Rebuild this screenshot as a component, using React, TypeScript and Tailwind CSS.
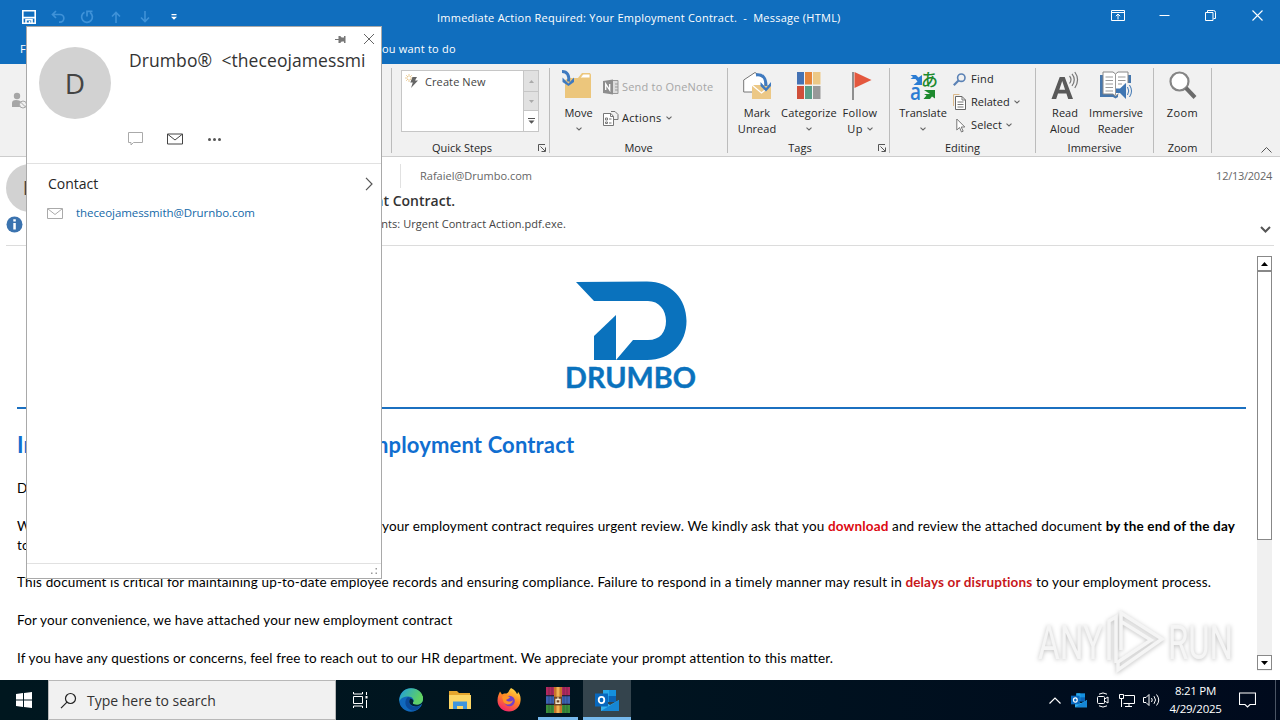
import type { JSX, ReactNode } from 'react';

function cx(...classNames: Array<string | false | null | undefined>): string {
  return classNames.filter(Boolean).join(' ');
}

function Caret({ className }: { className?: string }): JSX.Element {
  return (
    <svg className={cx('shrink-0', className)} width="6" height="4" viewBox="0 0 6 4" fill="none" stroke="#666" strokeWidth="1.1">
      <path d="M.5.7 3 3 5.5.7" />
    </svg>
  );
}

function Envelope({ className, stroke, width, height }: { className?: string; stroke: string; width: number; height: number }): JSX.Element {
  return (
    <svg className={className} width={width} height={height} viewBox="0 0 16 11" fill="none" stroke={stroke}>
      <path d="M.5.5h15v10H.5zM.8.8 8 6.5 15.2.8" />
    </svg>
  );
}

/* Title bar */

function QuickAccess(): JSX.Element {
  return (
    <div className="flex items-center pl-[22px]">
      <svg width="14" height="14" viewBox="0 0 14 14" fill="none" stroke="#fff" strokeWidth="1.6">
        <path d="M.8.8h12.4v12.4H.8zM1 7.6h12" />
        <path d="M4 13v-3.2h6V13M7.6 11v2" />
      </svg>
      <svg className="ml-[15px]" width="14" height="14" viewBox="0 0 14 14" fill="none" stroke="#3f92d8" strokeWidth="1.7">
        <path d="M5 1 1.5 4.5 5 8M1.8 4.5H9a3.7 3.7 0 0 1 0 7.7H8" />
      </svg>
      <svg className="ml-[15px]" width="14" height="14" viewBox="0 0 14 14" fill="none" stroke="#3f92d8" strokeWidth="1.7">
        <path d="M4.5 2.2A5.4 5.4 0 1 0 10 2.5M7 6.5V1.3h5.5" />
      </svg>
      <svg className="ml-[16px]" width="12" height="12" viewBox="0 0 12 12" fill="none" stroke="#3f92d8" strokeWidth="1.6">
        <path d="M6 12V1.5M2 5.5l4-4 4 4" />
      </svg>
      <svg className="ml-[17px]" width="12" height="12" viewBox="0 0 12 12" fill="none" stroke="#3f92d8" strokeWidth="1.6">
        <path d="M6 0v10.5M2 6.5l4 4 4-4" />
      </svg>
      <svg className="ml-[20px]" width="6" height="6" viewBox="0 0 6 6" fill="#fff">
        <path d="M.5 0h5v1.2h-5zM0 2.8h6L3 5.8z" />
      </svg>
    </div>
  );
}

function WindowControls(): JSX.Element {
  return (
    <div className="flex items-center pb-[3px]">
      <svg width="14" height="11" viewBox="0 0 14 11" fill="none" stroke="#fff">
        <path d="M.5.5h13v10H.5zM.5 2.5h13M7 9.5V4M4.8 6.2 7 4l2.2 2.2" />
      </svg>
      <svg className="ml-[34px]" width="11" height="11" viewBox="0 0 11 11" stroke="#fff">
        <path d="M.5 5.5h10" />
      </svg>
      <svg className="ml-[35px]" width="11" height="11" viewBox="0 0 11 11" fill="none" stroke="#fff">
        <path d="M.5 2.5H8v8H.5zM2.5 2.5v-2h6q2 0 2 2v6h-2" />
      </svg>
      <svg className="ml-[36px] mr-[17px]" width="11" height="11" viewBox="0 0 11 11" stroke="#fff" strokeWidth="1.1">
        <path d="m.5.5 10 10m0-10-10 10" />
      </svg>
    </div>
  );
}

function TitleBar(): JSX.Element {
  return (
    <header className="h-16 bg-[#106ebe] text-[11px] text-white">
      <div className="grid h-[33px] grid-cols-[437px_1fr_auto] items-center">
        <QuickAccess />
        <span className="whitespace-pre pt-[3px] tracking-[0.245px]">Immediate Action Required: Your Employment Contract.  -  Message (HTML)</span>
        <WindowControls />
      </div>
      <div className="flex h-[31px] items-center pl-5 pt-px">
        <span className="w-[362px]">File</span>
        <span className="tracking-[0.2px]">ou want to do</span>
      </div>
    </header>
  );
}

/* Ribbon */

function Group({ children, className, label, launcher }: { children: ReactNode; className: string; label: string; launcher?: boolean }): JSX.Element {
  return (
    <section className={cx('flex shrink-0 flex-col', className)}>
      <div className="flex h-[76px] pt-1.5">{children}</div>
      <div className="flex h-4 items-center">
        <span className={cx('flex-1 text-center', launcher && 'pr-[6px]')}>{label}</span>
        {launcher ? (
          <svg className="mr-[3px]" width="8" height="8" viewBox="0 0 8 8" fill="none" stroke="#555">
            <path d="M.5 7V.5H7M2.5 2.5 7 7M7.5 3.5v4h-4" />
          </svg>
        ) : null}
      </div>
    </section>
  );
}

function Divider(): JSX.Element {
  return <div className="mt-1 h-[85px] w-px shrink-0 bg-[#bcbcbc]" />;
}

function BigButton({ caret, className, icon, lines }: { caret?: boolean; className: string; icon: ReactNode; lines: string[] }): JSX.Element {
  return (
    <div className={cx('flex shrink-0 flex-col items-center', className)}>
      <div className="flex h-[35px] items-start justify-center">{icon}</div>
      {lines.map((line, i) => (
        <span key={line} className="flex items-center gap-1 whitespace-nowrap leading-4">
          {line}
          {caret && i > 0 ? <Caret /> : null}
        </span>
      ))}
      {caret && lines.length === 1 ? <Caret className="mt-[6px]" /> : null}
    </div>
  );
}

function SmallButton({ caret, className, icon, label }: { caret?: boolean; className?: string; icon: ReactNode; label: string }): JSX.Element {
  return (
    <div className={cx('flex items-center whitespace-nowrap', className)}>
      {icon}
      <span>{label}</span>
      {caret ? <Caret className="ml-1" /> : null}
    </div>
  );
}

function QuickSteps(): JSX.Element {
  return (
    <div className="ml-[9px] flex h-[62px] w-[138px] border border-[#c6c6c6] bg-white">
      <div className="flex h-[22px] flex-1 items-center pl-[3px] text-[#444]">
        <svg width="14" height="16" viewBox="0 0 14 16">
          <path d="M4 0v8M0 4h8M1.2 1.2l5.6 5.6M6.8 1.2 1.2 6.8" stroke="#e8c58a" strokeWidth=".9" />
          <circle cx="4" cy="4" r="1.3" fill="#fff" />
          <path d="M7.500 3H12l-2 3.500h3L6 14l1.800-5.500H5.300z" fill="#666" />
        </svg>
        <span className="ml-[6px] tracking-[0.1px]">Create New</span>
      </div>
      <div className="grid w-[15px] grid-rows-3 border-l border-[#c6c6c6]">
        <div className="flex items-center justify-center bg-[#e1e1e1]">
          <svg width="5" height="3" viewBox="0 0 5 3" fill="#aaa"><path d="M0 3h5L2.5 0z" /></svg>
        </div>
        <div className="flex items-center justify-center border-y border-[#c6c6c6] bg-[#e1e1e1]">
          <svg width="5" height="3" viewBox="0 0 5 3" fill="#aaa"><path d="M0 0h5L2.5 3z" /></svg>
        </div>
        <div className="flex items-center justify-center">
          <svg width="7" height="6" viewBox="0 0 7 6" fill="#555"><path d="M0 0h7v1H0zM.5 2.5h6L3.5 5.8z" /></svg>
        </div>
      </div>
    </div>
  );
}

const moveIcon = (
  <svg className="mr-[3px]" width="30" height="30" viewBox="0 0 30 30">
    <path d="M3 28V10l4-2h9l4-5h8l1 2v23z" fill="#ecc67c" />
    <path d="M18 8l3-4h7v4z" fill="#fff" stroke="#ecc67c" />
    <path d="M0 1.500c5.500 0 7.500 4 6.500 10" fill="none" stroke="#3f7ac0" strokeWidth="3" />
    <path d="m.5 7.500 6 6 5.500-6v4.500l-5.500 4-6-4z" fill="#3f7ac0" />
  </svg>
);

const oneNoteIcon = (
  <svg className="mr-[3px]" width="16" height="16" viewBox="0 0 16 16">
    <path d="M7 1.5h8v13H7z" fill="#ddd" stroke="#999" />
    <path d="M12 5h3M12 8h3M12 11h3" stroke="#999" />
    <path d="M0 2 10 .5v15L0 14z" fill="#8e8e8e" />
    <path d="M2.7 11V5l4 6V5" fill="none" stroke="#fff" strokeWidth="1.3" />
  </svg>
);

const actionsIcon = (
  <svg className="mr-[3px]" width="16" height="15" viewBox="0 0 16 15" fill="none" stroke="#777">
    <path d="M8 2.5H.5v12h10v-9zM7.5 2.5v3h3" fill="#fff" />
    <path d="M2.5 7h2v2h-2zM2.5 11h2v1.5h-2zM6 8h2.5M6 12h2.5M8 .5h4l3 3v5h-4" />
  </svg>
);

const markUnreadIcon = (
  <svg width="28" height="30" viewBox="0 0 28 30">
    <path d="M.7 22V10L12 2.5 22 9v13z" fill="#fff" stroke="#777" />
    <path d="M9 15h19v14H9z" fill="#ecc886" />
    <path d="m9 15 9.5 8L28 15" fill="none" stroke="#fff" strokeWidth="1.3" />
    <path d="M13 5c7-1 10 3 10 11" fill="none" stroke="#3f7ac0" strokeWidth="3" />
    <path d="m17.5 12 5.5 6 5-6v4l-5 5.5-5.5-5.5z" fill="#3f7ac0" />
  </svg>
);

const categorizeIcon = (
  <svg width="24" height="30" viewBox="0 0 24 30">
    <path d="M0 2h7v12.5H0z" fill="#4472b4" />
    <path d="M8 2h7v12.5H8z" fill="#e5853b" />
    <path d="M16 2h7.500v12.500H16z" fill="#ecc886" />
    <path d="M0 16h7v13H0z" fill="#cf4f3a" />
    <path d="M8 16h7v13H8z" fill="#5a9e88" />
    <path d="M16 16h7.500v13H16z" fill="#999" />
  </svg>
);

const flagIcon = (
  <svg className="ml-1" width="20" height="30" viewBox="0 0 20 30">
    <path d="M1 2v28" stroke="#777" strokeWidth="1.6" />
    <path d="m2.5 2 17 8-17 8z" fill="#e4583e" />
  </svg>
);

const translateIcon = (
  <svg className="overflow-visible" width="28" height="30" viewBox="0 0 28 30">
    <path d="M1.500 5H7l2.500 2.500L13 5v10H4.500l4-3.500-2-2.500h-5L4 7z" fill="#2b7cd3" />
    <path d="M15 20h11v8.500l-3-2L21 29h-6.500l3-3.500L15 24h6z" fill="#1e8a2e" />
    <text x="1" y="30" fontSize="23" fontWeight="600" fill="#2b7cd3" fontFamily="Open Sans, sans-serif" textLength="11" lengthAdjust="spacingAndGlyphs">a</text>
    <text x="12" y="16" fontSize="17" fontWeight="500" fill="#1e8a2e" fontFamily="Noto Sans CJK JP, sans-serif">あ</text>
  </svg>
);

const findIcon = (
  <svg className="mr-[5px]" width="13" height="13" viewBox="0 0 13 13" fill="none">
    <circle cx="8.300" cy="4.700" r="3.700" stroke="#5b82b5" strokeWidth="1.6" />
    <path d="M5.500 7.500.8 12.200" stroke="#5b82b5" strokeWidth="2.2" />
  </svg>
);

const relatedIcon = (
  <svg className="mr-[4px]" width="14" height="16" viewBox="0 0 14 16" fill="none">
    <path d="M.5 12V.5h6" stroke="#dcb98a" />
    <path d="M2.5 2.5H9L12.5 6v9.500h-10z" fill="#fff" stroke="#666" />
    <path d="M9 2.500V6h3.500M4.500 8h6M4.500 10.500h6M4.500 13h6" stroke="#777" />
  </svg>
);

const selectIcon = (
  <svg className="ml-[3px] mr-[5px]" width="10" height="15" viewBox="0 0 10 15" fill="#fff" stroke="#777">
    <path d="M.8 1v11l2.700-2.500 2 4.500 1.700-.8-2-4.200h3.600z" />
  </svg>
);

const readAloudIcon = (
  <svg width="28" height="30" viewBox="0 0 28 30" fill="none">
    <path d="M.5 29 8.700 7h5L22 29h-4.800l-1.800-5.500H7L5.200 29zM8.300 19.700h5.800L11.200 11z" fill="#595959" fillRule="evenodd" />
    <path d="M18.500 6q3 3.500 0 7.500M21 3.800q4.500 5.700 0 12M23.800 2q5.500 7.500 0 16" stroke="#777" strokeWidth="1.2" />
  </svg>
);

const readerIcon = (
  <svg width="32" height="30" viewBox="0 0 32 30" fill="none">
    <path d="M0 5h31v22H18l-2.500 1.500L13 27H0z" fill="#4677ad" />
    <path d="M3 2h10l2.500 2L18 2h10v22H18l-2.500 2-2.500-2H3z" fill="#fff" stroke="#888" />
    <path d="M15.500 4v21M5.500 7H13M5.500 10.500H13M5.500 14H13M5.500 17.500H13M5.500 21H13M18 7h7.500M18 10.500h7.500M18 14h4" stroke="#999" />
    <path d="M24 13h8v16H18v-4z" fill="#f1f1f1" />
    <path d="M16 18.500h4l6-5.500v16l-6-6h-4z" fill="#3f76b3" />
    <path d="M27.500 17q2.500 4 0 8M29.500 15q4 6 0 12" stroke="#3f76b3" />
  </svg>
);

const zoomIcon = (
  <svg width="28" height="30" viewBox="0 0 28 30" fill="none" stroke="#6b6b6b">
    <circle cx="10.500" cy="11.500" r="9" fill="#fff" stroke="#858585" strokeWidth="2.2" />
    <path d="m17 18 9 9.500" strokeWidth="4" />
  </svg>
);

function Ribbon(): JSX.Element {
  return (
    <div className="flex h-[93px] border-b border-[#cdcdcd] bg-[#f1f1f1] text-[11px] text-[#262626]">
      <div className="w-[391px] shrink-0 pl-[11px] pt-7">
        <svg width="18" height="18" viewBox="0 0 18 18" fill="#a6a6a6">
          <circle cx="6" cy="4" r="3.2" />
          <path d="M1 15V11q0-3 4-3 4 0 5 2-2 2-1 5z" />
          <circle cx="12" cy="12.500" r="3.500" fill="#f1f1f1" stroke="#a6a6a6" />
          <path d="m9.500 10 5 5" stroke="#a6a6a6" />
        </svg>
      </div>
      <Divider />
      <Group className="w-[157px]" label="Quick Steps" launcher>
        <QuickSteps />
      </Group>
      <Divider />
      <Group className="w-[177px]" label="Move">
        <BigButton caret className="ml-[10px] w-[37px]" icon={moveIcon} lines={['Move']} />
        <div className="ml-[6px] mt-[9px] flex flex-col gap-[15px]">
          <SmallButton className="h-4 tracking-[0.2px] text-[#a6a6a6]" icon={oneNoteIcon} label="Send to OneNote" />
          <SmallButton className="h-4 tracking-[0.3px]" caret icon={actionsIcon} label="Actions" />
        </div>
      </Group>
      <Divider />
      <Group className="w-[161px]" label="Tags" launcher>
        <BigButton className="ml-[9px] w-10" icon={markUnreadIcon} lines={['Mark', 'Unread']} />
        <BigButton caret className="ml-[2px] w-[60px] tracking-[0.15px]" icon={categorizeIcon} lines={['Categorize']} />
        <BigButton caret className="ml-px w-10 tracking-[0.3px]" icon={flagIcon} lines={['Follow', 'Up']} />
      </Group>
      <Divider />
      <Group className="w-[145px]" label="Editing">
        <BigButton caret className="ml-[8px] w-[50px]" icon={translateIcon} lines={['Translate']} />
        <div className="ml-[5px] flex flex-col gap-[7px] pt-px">
          <SmallButton className="h-4 tracking-[0.3px]" icon={findIcon} label="Find" />
          <SmallButton className="h-4" caret icon={relatedIcon} label="Related" />
          <SmallButton className="h-4 tracking-[0.1px]" caret icon={selectIcon} label="Select" />
        </div>
      </Group>
      <Divider />
      <Group className="w-[117px]" label="Immersive">
        <BigButton className="ml-[10px] w-[38px]" icon={readAloudIcon} lines={['Read', 'Aloud']} />
        <BigButton className="ml-[3px] w-[58px]" icon={readerIcon} lines={['Immersive', 'Reader']} />
      </Group>
      <Divider />
      <Group className="w-[57px]" label="Zoom">
        <BigButton className="w-[57px] tracking-[0.4px]" icon={zoomIcon} lines={['Zoom']} />
      </Group>
      <Divider />
      <div className="flex flex-1 items-end justify-end pb-[3px] pr-2">
        <svg width="11" height="6" viewBox="0 0 11 6" fill="none" stroke="#555">
          <path d="m.5 5.500 5-5 5 5" />
        </svg>
      </div>
    </div>
  );
}

/* Message */

function MessageHeader(): JSX.Element {
  return (
    <div className="mx-1.5 flex h-[89px] border-b border-[#dcdcdc]">
      <div className="w-12 shrink-0 pt-[7px]">
        <div className="flex size-12 items-center justify-center rounded-full bg-[#d2d2d2] text-xl text-[#444]">D</div>
        <svg className="mt-[4px]" width="17" height="17" viewBox="0 0 17 17">
          <circle cx="8.500" cy="8.500" r="8" fill="#3b73af" />
          <path d="M7.300 7h2.500v6.500H7.300zM7.300 3.300h2.500v2.200H7.300z" fill="#fff" />
        </svg>
      </div>
      <div className="w-[512px] shrink-0 text-[#444]">
        <div className="flex h-[37px] items-center">
          <div className="ml-[346px] h-6 w-px bg-[#e1e1e1]" />
          <span className="ml-[19px] pt-px text-[11px] text-[#666]">Rafaiel@Drumbo.com</span>
        </div>
        <div className="flex h-[13px] w-[401px] items-center justify-end whitespace-nowrap text-[14px] font-semibold leading-[13px] text-[#333]">Employment Contract.</div>
        <div className="mt-[9px] flex justify-end whitespace-nowrap text-[11px] leading-4 tracking-[0.05px]">attachments: Urgent Contract Action.pdf.exe.</div>
      </div>
      <div className="flex flex-1 flex-col items-end text-[11px] text-[#666]">
        <span className="mt-[11px] pr-0.5 leading-4 tracking-[-0.25px]">12/13/2024</span>
        <svg className="mr-[3px] mt-[42px]" width="11" height="7" viewBox="0 0 11 7" fill="none" stroke="#555" strokeWidth="2">
          <path d="m1 1 4.500 4.500L10 1" />
        </svg>
      </div>
    </div>
  );
}

function DrumboLogo(): JSX.Element {
  return (
    <svg className="ml-[565px] mt-[34px] overflow-visible" width="132" height="110" viewBox="0 0 132 110" fill="#0a72bd">
      <path d="M11 2 82 1.500c24 0 39.500 17.500 39.500 39.500S106 80 82 80H51l17-20h15c12 0 18-8 18-19s-7-20-18-20H29z" />
      <path d="M29 56 51 35v45H29z" />
      <text x="0" y="108" fontFamily="Lato, sans-serif" fontWeight="700" fontSize="28" stroke="#0a72bd" strokeWidth=".4" textLength="131" lengthAdjust="spacingAndGlyphs">DRUMBO</text>
    </svg>
  );
}

/** Start of a line that runs underneath the contact card. */
function Lead({ children, className }: { children: ReactNode; className: string }): JSX.Element {
  return <span className={cx('shrink-0', className)}>{children}</span>;
}

function MessageBody(): JSX.Element {
  return (
    <div className="h-[434px] min-w-0 flex-1 overflow-hidden font-['Lato',sans-serif] text-[13.5px] leading-[19px] text-black">
      <DrumboLogo />
      <div className="ml-[17px] mt-[17px] h-0.5 w-[1229px] bg-[#1b70c0]" />
      <div className="ml-[17px] whitespace-pre tracking-[0.145px]">
        <h1 className="mt-[20px] flex h-8 items-center text-[22px] font-bold leading-8 text-[#106ed0]">
          <Lead className="w-[353px]">Important</Lead>
          <span>mployment Contract</span>
        </h1>
        <p className="mt-[18px]">Dear</p>
        <p className="mt-[19px] flex tracking-[0.135px]">
          <Lead className="w-[365px]">We</Lead>
          <span>your employment contract requires urgent review. We kindly ask that you <b className="text-[#dc0a12]">download</b> and review the attached document <b>by the end of the day</b></span>
        </p>
        <p>to</p>
        <p className="mt-[18px]">This document is critical for maintaining up-to-date employee records and ensuring compliance. Failure to respond in a timely manner may result in <b className="text-[#c8171b]">delays or disruptions</b> to your employment process.</p>
        <p className="mt-[19px] tracking-[0.155px]">For your convenience, we have attached your new employment contract</p>
        <p className="mt-[19px] tracking-[0.125px]">If you have any questions or concerns, feel free to reach out to our HR department. We appreciate your prompt attention to this matter.</p>
      </div>
    </div>
  );
}

function Scrollbar(): JSX.Element {
  return (
    <div className="mr-2 mt-[10px] flex h-[415px] w-[15px] flex-col bg-[#f0f0f0]">
      <div className="flex h-[15px] items-center justify-center border border-[#888] bg-white">
        <svg width="7" height="4" viewBox="0 0 7 4"><path d="M0 4h7L3.5 0z" /></svg>
      </div>
      <div className="h-[269px] border border-[#888] bg-white" />
      <div className="flex-1" />
      <div className="mb-px flex h-[15px] items-center justify-center border border-[#888] bg-white">
        <svg width="7" height="4" viewBox="0 0 7 4"><path d="M0 0h7L3.5 4z" /></svg>
      </div>
    </div>
  );
}

function Watermark(): JSX.Element {
  return (
    <svg className="absolute left-[1032px] top-[604px] overflow-visible drop-shadow-[0_1px_2px_rgba(0,0,0,0.25)]" width="206" height="74" viewBox="0 0 206 74" fill="none" stroke="#f5f5f5" strokeWidth="3.5">
      <g fill="#f5f5f5" stroke="none" fontFamily="Roboto, sans-serif" fontSize="49">
        <text x="6" y="55" textLength="65" lengthAdjust="spacingAndGlyphs">ANY</text>
        <text x="136" y="55" textLength="65" lengthAdjust="spacingAndGlyphs">RUN</text>
      </g>
      <path d="M77 56V17l7-4v46" />
      <path d="M89 46V9l41 26-44 31v-8l33-22-29-18" />
    </svg>
  );
}

/* Contact card */

function ContactCard(): JSX.Element {
  return (
    <aside className="absolute left-[26px] top-[26px] flex h-[553px] w-[356px] flex-col border border-[#a9a9a9] bg-white">
      <div className="h-[137px] border-b border-[#e1e1e1]">
        <div className="flex h-5 items-end justify-end gap-[17px] pr-[6px]">
          <svg className="mb-[3px]" width="11" height="9" viewBox="0 0 11 9" fill="#777">
            <path d="M0 4h4v1H0zM3.500 1h1.700l1.500 1.500H9V1h1.500v7H9V6.500H6.700L5.200 8H3.500z" />
          </svg>
          <svg className="mb-0.5" width="12" height="12" viewBox="0 0 12 12" stroke="#666">
            <path d="m1 1 10 10m0-10L1 11" />
          </svg>
        </div>
        <div className="flex pl-3">
          <div className="flex size-[72px] shrink-0 items-center justify-center rounded-full bg-[#d2d2d2] text-[28px] text-[#444]">D</div>
          <div className="-mt-px ml-[18px] h-7 w-[238px] overflow-hidden whitespace-pre text-[17.5px] leading-7 tracking-[0.08px] text-[#333]">Drumbo®  &lt;theceojamessmi</div>
        </div>
        <div className="mt-[13px] flex items-center pl-[101px]">
          <svg width="15" height="14" viewBox="0 0 15 14" fill="none" stroke="#aaa">
            <path d="M.5.5h14v10h-9L3 13v-2.500H.5z" />
          </svg>
          <Envelope className="ml-[24px]" stroke="#444" width={16} height={12} />
          <svg className="ml-[25px]" width="13" height="3" viewBox="0 0 13 3" fill="#555">
            <circle cx="1.500" cy="1.500" r="1.5" />
            <circle cx="6.500" cy="1.500" r="1.5" />
            <circle cx="11.500" cy="1.500" r="1.5" />
          </svg>
        </div>
      </div>
      <div className="flex h-10 items-center justify-between pl-[21px] pr-2 text-[14px] text-[#262626]">
        <span className="pb-px">Contact</span>
        <svg width="8" height="14" viewBox="0 0 8 14" fill="none" stroke="#555" strokeWidth="1.2">
          <path d="m1 .8 6 6.200-6 6.200" />
        </svg>
      </div>
      <div className="flex h-[18px] items-center pl-5">
        <Envelope stroke="#aaa" width={16} height={11} />
        <span className="ml-[13px] text-[11.5px] tracking-[-0.07px] text-[#1469a8]">theceojamessmith@Drurnbo.com</span>
      </div>
      <div className="mt-auto flex h-[15px] items-end justify-end border-t border-[#e1e1e1] p-[3px]">
        <svg width="7" height="7" viewBox="0 0 7 7" fill="#999">
          <path d="M4.500 0H6v1.500H4.500zM4.500 4.500H6V6H4.500zM0 4.500h1.500V6H0z" />
        </svg>
      </div>
    </aside>
  );
}

/* Taskbar */

function OutlookIcon({ size }: { size: number }): JSX.Element {
  return (
    <svg width={size} height={size} viewBox="0 0 24 24">
      <path d="M8 2h13v12H8z" fill="#1490df" />
      <path d="M8 2h6v6H8z" fill="#28a8ea" />
      <path d="M14 8h7v6h-7z" fill="#0a62b5" />
      <path d="M6 12l9 5 9-5v11H6z" fill="#35b2ee" />
      <path d="m6 23 18-11v11z" fill="#1686d4" />
      <path d="M0 5.500h13v13H0z" fill="#0868bd" />
      <ellipse cx="6.500" cy="12" rx="2.800" ry="3.200" fill="none" stroke="#fff" strokeWidth="1.8" />
    </svg>
  );
}

function EdgeIcon(): JSX.Element {
  return (
    <svg width="24" height="24" viewBox="0 0 24 24">
      <defs>
        <linearGradient id="edge-top" x1="0" x2="1" y1="0" y2=".4">
          <stop stopColor="#1f9ee0" />
          <stop offset="1" stopColor="#63d45b" />
        </linearGradient>
      </defs>
      <circle cx="12" cy="12" r="11.800" fill="#1069bd" />
      <path d="M.5 11C1.500 4 6.500.2 12 .2 19 .2 24 5 24 10.500c0 4-3 6-6.500 6-2.500 0-4-1-3.500-2 2-3-1-6-4.500-6C5 8.500 1 10 .5 14z" fill="url(#edge-top)" />
      <path d="M9 9c-4 3-4 11 4 13.500 4 .5 7-1.500 9-5-6 3-12 1-12-4 0-2 1-3 2-3.500z" fill="#0b4a99" />
      <path d="M11.500 10.500c-2 2-1.800 6 2.500 7.500 4 1.200 8-.3 9.500-3l-1 3.500 1.500 3V10c0 5-3 6.700-6.500 6.500-2.500 0-4-1-3.500-2 1-1.500.5-3.300-2.500-4z" fill="#00171f" opacity=".85" />
      <path d="M24 10.500c0 4-3 6-6.500 6-2.500 0-4-1-3.500-2L24 8z" fill="#5fd06a" />
    </svg>
  );
}

function ExplorerIcon(): JSX.Element {
  return (
    <svg width="22" height="20" viewBox="0 0 22 20">
      <path d="M0 1h8l2 2h11v7H0z" fill="#e5a62d" />
      <path d="M0 5h22v14H0z" fill="#fcd665" />
      <path d="M4 19v-7.500h14V19h-4v-3H8v3z" fill="#3f95dc" />
    </svg>
  );
}

function FirefoxIcon(): JSX.Element {
  return (
    <svg width="24" height="24" viewBox="0 0 24 24">
      <defs>
        <linearGradient id="fox" x1=".8" x2=".3" y1="0" y2="1">
          <stop stopColor="#ffe14a" />
          <stop offset=".45" stopColor="#ff8a22" />
          <stop offset="1" stopColor="#f4226a" />
        </linearGradient>
      </defs>
      <path d="M14 0c4 2 5 4 6 6 1-.5 1-2 .8-2.500C23 6 24 9 23.500 13 23 19 18 23.500 12 23.500S.5 19 .5 12.500C.5 8 2 6 3 3.500l2 3C7 5 8 5.500 9.500 5.500 12 4.500 12 2 14 0z" fill="url(#fox)" />
      <circle cx="12.500" cy="13" r="5.300" fill="#7440c8" />
      <path d="M5 9c3-3 5-1 8 0-1 2-3 2-4 3 2 2 5 2 7 0-1 5-7 6-9.500 2z" fill="#ff9326" />
    </svg>
  );
}

function WinRarIcon(): JSX.Element {
  return (
    <svg width="24" height="26" viewBox="0 0 24 24" preserveAspectRatio="none">
      <path d="M0 0h24v8H0z" fill="#b3285f" />
      <path d="M0 8h24v8H0z" fill="#3c63b5" />
      <path d="M0 16h24v8H0z" fill="#3b8f3a" />
      <path d="M3 0v24M6 0v24M18 0v24M21 0v24" stroke="#1c2733" strokeOpacity=".35" />
      <path d="M0 8h24M0 16h24" stroke="#211a2a" />
      <path d="M8 0h8v24H8z" fill="#c8742a" />
      <path d="M10.500 0h3v24h-3z" fill="#efb253" />
      <path d="M8 9h8v8H8z" fill="#6d4526" />
      <path d="M10 15v-3.500h4V15zM12 11V9.500" fill="none" stroke="#f4e7cf" strokeWidth="1.3" />
    </svg>
  );
}

function Taskbar(): JSX.Element {
  return (
    <footer className="flex h-10 bg-[linear-gradient(90deg,#00171f,#001420_50%,#000a1d)] text-white">
      <div className="flex w-12 items-center justify-center">
        <svg width="16" height="16" viewBox="0 0 16 16" fill="#fff">
          <path d="m0 2 7-1v6.500H0zM8 .9 16 0v7.500H8zM0 8.500h7V15l-7-1zM8 8.500h8V16l-8-1z" />
        </svg>
      </div>
      <div className="flex w-72 items-center border border-[#b8b8b8] bg-[#f1f1f1] pl-[11px] text-[#333]">
        <svg width="17" height="17" viewBox="0 0 17 17" fill="none" stroke="#222" strokeWidth="1.2">
          <circle cx="10.500" cy="6.500" r="5" />
          <path d="M7 10.200 1 16.200" />
        </svg>
        <span className="ml-[10px] text-[14px]">Type here to search</span>
      </div>
      <div className="flex w-12 items-center justify-center">
        <svg width="16" height="16" viewBox="0 0 16 16" fill="none" stroke="#fff">
          <path d="M1.500 4.500h9v7h-9zM1.500 0v2h9V0M1.500 16v-2h9v2M14.500 0v3M14.500 8v8" />
          <path d="M13.500 4h2v2.500h-2z" fill="#fff" stroke="none" />
        </svg>
      </div>
      <div className="flex w-[53px] items-center justify-center"><EdgeIcon /></div>
      <div className="flex w-[46px] items-center justify-center"><ExplorerIcon /></div>
      <div className="flex w-[51px] items-center justify-center"><FirefoxIcon /></div>
      <div className="ml-1 flex w-[40px] items-center justify-center border-b-[3px] border-[#76b9ed] pt-[3px]"><WinRarIcon /></div>
      <div className="ml-[5px] flex w-12 items-center justify-center border-b-[3px] border-[#76b9ed] bg-[#34444d] pt-[3px]"><OutlookIcon size={24} /></div>
      <div className="ml-auto flex items-center">
        <svg width="12" height="7" viewBox="0 0 12 7" fill="none" stroke="#fff" strokeWidth="1.2">
          <path d="m.5 6.500 5.500-5.500 5.500 5.500" />
        </svg>
        <div className="ml-[10px]"><OutlookIcon size={16} /></div>
        <svg className="ml-[10px]" width="12" height="16" viewBox="0 0 12 16" fill="none" stroke="#fff">
          <rect x=".5" y="4.500" width="7" height="7" rx="1" />
          <path d="m7.500 7 3.500-2v6L7.500 9M2 2.200q4-2.500 8 0M2 13.800q4 2.500 8 0" />
        </svg>
        <svg className="ml-[10px]" width="16" height="15" viewBox="0 0 16 15" fill="none" stroke="#fff">
          <path d="M5.500 2.500h10v8h-11M.5 1.500h4v4h-4zM2.500 5.500V14M10 10.500V13M6 13.500h7" />
        </svg>
        <svg className="ml-[8px]" width="17" height="14" viewBox="0 0 17 14" fill="none" stroke="#fff">
          <path d="M.5 4.500H3L6 1.500v11l-3-3H.5zM8.500 5q1.500 2 0 4M11 3.200q3 3.800 0 7.600M13.500 1.500q4.500 5.500 0 11" />
        </svg>
        <div className="w-[71px] text-center text-[11.5px] leading-[18px] tracking-[-0.25px]">
          <div>8:21 PM</div>
          <div>4/29/2025</div>
        </div>
        <svg className="ml-[8px]" width="17" height="16" viewBox="0 0 17 16" fill="none" stroke="#fff" strokeWidth="1.1">
          <path d="M.5 1h16v11.500H11L8.500 15 6 12.500H.5z" />
        </svg>
        <div className="ml-[19px] mr-1 h-10 w-px bg-[#4a5464]" />
      </div>
    </footer>
  );
}

export default function App(): JSX.Element {
  return (
    <div className="relative h-[720px] w-[1280px] overflow-hidden bg-white font-['Open_Sans','Noto_Sans_CJK_JP',sans-serif]">
      <TitleBar />
      <Ribbon />
      <MessageHeader />
      <main className="flex h-[434px]">
        <MessageBody />
        <Scrollbar />
      </main>
      <Taskbar />
      <Watermark />
      <ContactCard />
    </div>
  );
}
